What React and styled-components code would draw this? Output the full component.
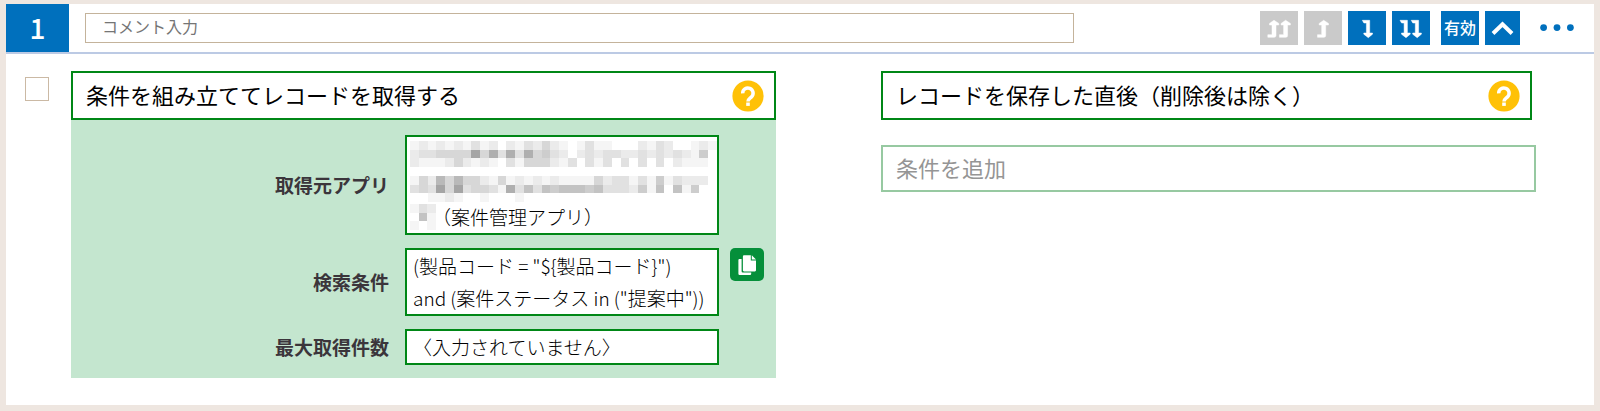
import React from "react";
import styled, { createGlobalStyle } from "styled-components";

const GlobalStyle = createGlobalStyle`
  * {
    box-sizing: border-box;
  }
  body {
    margin: 0;
    background-color: #eee6e0;
    font-family: "Noto Sans CJK JP", "Noto Sans", sans-serif;
    color: #000;
  }
  button,
  input {
    font-family: inherit;
  }
`;

const Page = styled.main`
  padding: 4px 6px 6px;
`;

const Card = styled.section`
  background-color: white;
`;

const Header = styled.header`
  display: flex;
  align-items: center;
  height: 50px;
  border-bottom: 2px solid #bccae4;
`;

const StepNumber = styled.div`
  align-self: stretch;
  width: 63px;
  background-color: #0070bd;
  color: white;
  font-size: 28px;
  font-weight: 500;
  line-height: 46px;
  text-align: center;
`;

const CommentInput = styled.input`
  flex: 1;
  min-width: 0;
  height: 30px;
  margin-left: 16px;
  padding: 0 16px 4px;
  border: 1px solid #c4b39b;
  font-size: 16px;

  &::placeholder {
    color: #757575;
    opacity: 1;
  }
`;

const Toolbar = styled.div`
  display: flex;
  align-items: center;
  margin-left: 186px;
`;

const ButtonGroup = styled.div`
  display: flex;
  gap: 6px;
  margin-right: 11px;
`;

const ToolButton = styled.button`
  width: ${(props) => (props.$narrow ? "35px" : "38px")};
  height: 34px;
  padding: 0 0 2px;
  border: none;
  background-color: #0070bd;
  color: white;
  font-size: 16px;
  font-weight: 500;
  line-height: 32px;
  white-space: nowrap;
  cursor: pointer;

  &:disabled {
    background-color: #cacaca;
    cursor: default;
  }

  svg {
    display: block;
  }
`;

const MoreButton = styled.button`
  margin-left: 9px;
  margin-right: 20px;
  padding: 0;
  border: none;
  background: none;
  cursor: pointer;

  svg {
    display: block;
  }
`;

const Body = styled.div`
  display: flex;
  padding: 17px 58px 27px 0;
`;

const CheckCell = styled.div`
  width: 65px;
  flex-shrink: 0;
  padding: 6px 0 0 19px;
`;

const Checkbox = styled.input`
  appearance: none;
  display: block;
  width: 24px;
  height: 24px;
  margin: 0;
  border: 1px solid #cbb9a4;
  background-color: white;

  &:checked {
    background-color: #0070bd;
  }
`;

const Columns = styled.div`
  flex: 1;
  display: grid;
  grid-template-columns: minmax(0, 705fr) minmax(0, 655fr);
  column-gap: 105px;
  align-items: start;
`;

const TitleBox = styled.div`
  display: flex;
  align-items: center;
  justify-content: space-between;
  height: 49px;
  padding: 0 10px 0 13px;
  border: 2px solid #008716;
  background-color: white;
`;

const Title = styled.h2`
  margin: 0;
  padding-bottom: 4px;
  font-size: 22px;
  font-weight: 400;
  line-height: 32px;
`;

const HelpButton = styled.button`
  flex-shrink: 0;
  padding: 0;
  border: none;
  background: none;
  cursor: pointer;

  svg {
    display: block;
  }
`;

const Panel = styled.dl`
  display: flex;
  flex-direction: column;
  gap: 13px;
  margin: 0;
  padding: 15px 12px 13px;
  background-color: #c4e6cf;
`;

const Row = styled.div`
  display: grid;
  grid-template-columns: minmax(0, 322fr) minmax(0, 325fr) 34px;
  align-items: center;
`;

const Label = styled.dt`
  padding-right: 16px;
  color: #3b353b;
  font-size: 19px;
  font-weight: 700;
  line-height: 32px;
  text-align: right;
`;

const Value = styled.dd`
  margin: 0 11px 0 0;
  padding: 0 6px;
  border: 2px solid #008716;
  background-color: white;
  font-size: 19px;
  font-weight: 300;
  line-height: 32px;
`;

const MaskedValue = styled(Value)`
  padding: 0 0 0 3px;
`;

const MaskedLines = styled.div`
  height: 64px;
  padding-top: 4px;

  svg {
    display: block;
  }
`;

const MaskedTail = styled.div`
  display: flex;
  align-items: center;
  height: 32px;

  svg {
    margin-right: -4px;
  }
`;

const CopyButton = styled.button`
  align-self: start;
  width: 34px;
  height: 33px;
  padding: 0;
  border: none;
  border-radius: 5px;
  background-color: #058f3a;
  cursor: pointer;

  svg {
    display: block;
  }
`;

const EventColumn = styled.div`
  display: flex;
  flex-direction: column;
  gap: 25px;
`;

const EventTitleBox = styled(TitleBox)`
  margin-right: 4px;
`;

const AddConditionButton = styled.button`
  height: 47px;
  padding: 0 13px 4px;
  border: 2px solid #97c9a1;
  background-color: white;
  color: #959595;
  font-size: 22px;
  line-height: 32px;
  text-align: left;
  cursor: pointer;
`;

// One digit per block, 0 is white and 9 is the darkest grey
const maskedName = [
  "12121213120213242101311000213200121",
  "23344449483838453202323322323232150",
  "21112421210314442130313030303021110",
  "00000000000000000000000000000000000",
  "14274744214121212111142331315132220",
  "34394934431836365666563332516061500",
  "00112100100010000000000000000000000",
];

const maskedTail = ["132", "061", "101"];

const Mosaic = ({ rows, width, height }) => {
  const columns = rows[0].length;
  return (
    <svg
      width={width}
      height={height}
      viewBox={`0 0 ${columns} ${rows.length}`}
      preserveAspectRatio="none"
      shapeRendering="crispEdges"
      aria-hidden="true"
    >
      {rows.map((row, y) =>
        row.split("").map((level, x) => {
          const shade = 255 - Number(level) * 10;
          return (
            <rect
              key={`${x}-${y}`}
              x={x}
              y={y}
              width="1"
              height="1"
              fill={`rgb(${shade}, ${shade}, ${shade})`}
            />
          );
        })
      )}
    </svg>
  );
};

const upArrow = "M0 26.3v-2.6h4.2V14H1.7v-1.6L6.2 9.3l4.8 3.1V14H8.2v10.6q0 1.7-1.7 1.7z";
const downArrow = "M.8 9.3h7.4V22H11v1.2L6.8 26.7 2.3 23.2V22h2.6V12H2.4z";

const ArrowIcon = ({ path, offsets }) => (
  <svg
    width="38"
    height="34"
    viewBox="0 0 38 34"
    fill="white"
    stroke="white"
    strokeWidth="0.5"
    strokeLinejoin="round"
    aria-hidden="true"
  >
    {offsets.map((x) => (
      <path key={x} d={path} transform={`translate(${x} 0)`} />
    ))}
  </svg>
);

const Help = () => (
  <HelpButton type="button" aria-label="ヘルプ">
    <svg width="32" height="32" viewBox="0 0 32 32" aria-hidden="true">
      <circle cx="16" cy="16" r="15.6" fill="#ffc107" />
      <path
        d="M10.7 13.4a5.2 5.2 0 1 1 8.8 3.5c-1.9 1.7-3.5 2.3-3.5 4.7"
        fill="none"
        stroke="white"
        strokeWidth="3.5"
      />
      <rect x="14.2" y="22.5" width="3.6" height="3.4" fill="white" />
    </svg>
  </HelpButton>
);

const App = () => {
  return (
    <Page>
      <GlobalStyle />
      <Card>
        <Header>
          <StepNumber>1</StepNumber>
          <CommentInput type="text" placeholder="コメント入力" aria-label="コメント入力" />
          <Toolbar>
            <ButtonGroup>
              <ToolButton type="button" disabled aria-label="先頭へ移動">
                <ArrowIcon path={upArrow} offsets={[7.8, 19.4]} />
              </ToolButton>
              <ToolButton type="button" disabled aria-label="上へ移動">
                <ArrowIcon path={upArrow} offsets={[13.5]} />
              </ToolButton>
              <ToolButton type="button" aria-label="下へ移動">
                <ArrowIcon path={downArrow} offsets={[13.5]} />
              </ToolButton>
              <ToolButton type="button" aria-label="末尾へ移動">
                <ArrowIcon path={downArrow} offsets={[7.2, 18.4]} />
              </ToolButton>
            </ButtonGroup>
            <ButtonGroup>
              <ToolButton type="button">有効</ToolButton>
              <ToolButton type="button" $narrow aria-label="折りたたむ">
                <svg width="35" height="34" viewBox="0 0 35 34" aria-hidden="true">
                  <path d="M8 22.5 17.5 13.3 27 22.5" fill="none" stroke="white" strokeWidth="4" />
                </svg>
              </ToolButton>
            </ButtonGroup>
            <MoreButton type="button" aria-label="メニュー">
              <svg width="34" height="8" viewBox="0 0 34 8" fill="#0070bd" aria-hidden="true">
                <circle cx="3.6" cy="3.6" r="3.4" />
                <circle cx="17" cy="3.6" r="3.4" />
                <circle cx="30.4" cy="3.6" r="3.4" />
              </svg>
            </MoreButton>
          </Toolbar>
        </Header>
        <Body>
          <CheckCell>
            <Checkbox type="checkbox" aria-label="選択" />
          </CheckCell>
          <Columns>
            <div>
              <TitleBox>
                <Title>条件を組み立ててレコードを取得する</Title>
                <Help />
              </TitleBox>
              <Panel>
                <Row>
                  <Label>取得元アプリ</Label>
                  <MaskedValue>
                    <MaskedLines>
                      <Mosaic rows={maskedName} width="307" height="61" />
                    </MaskedLines>
                    <MaskedTail>
                      <Mosaic rows={maskedTail} width="26" height="26" />
                      （案件管理アプリ）
                    </MaskedTail>
                  </MaskedValue>
                </Row>
                <Row>
                  <Label>検索条件</Label>
                  <Value>
                    (製品コード = "$&#123;製品コード&#125;")
                    <br />
                    and (案件ステータス in ("提案中"))
                  </Value>
                  <CopyButton type="button" aria-label="コピー">
                    <svg width="34" height="33" viewBox="0 0 34 33" fill="white" aria-hidden="true">
                      <path d="M9.4 11h2.2v12.2q0 1.2 1.2 1.2h8.4v1.4q0 1.2-1.2 1.2H9.6q-1.2 0-1.2-1.2V12q0-1 1-1z" />
                      <path d="M14 7.3h6.8v5.2h5.2v9.8q0 1.1-1.1 1.1H14q-1.1 0-1.1-1.1V8.4q0-1.1 1.1-1.1z" />
                      <path d="M21.8 7.3 26 11.5h-4.2z" />
                    </svg>
                  </CopyButton>
                </Row>
                <Row>
                  <Label>最大取得件数</Label>
                  <Value>〈入力されていません〉</Value>
                </Row>
              </Panel>
            </div>
            <EventColumn>
              <EventTitleBox>
                <Title>レコードを保存した直後（削除後は除く）</Title>
                <Help />
              </EventTitleBox>
              <AddConditionButton type="button">条件を追加</AddConditionButton>
            </EventColumn>
          </Columns>
        </Body>
      </Card>
    </Page>
  );
};

export default App;
